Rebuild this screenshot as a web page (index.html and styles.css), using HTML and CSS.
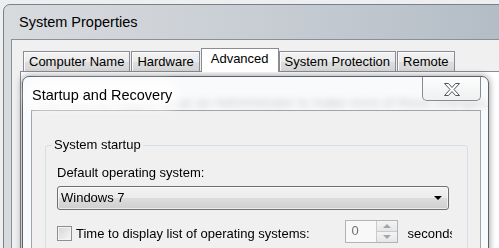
FILE: index.html
```html
<!DOCTYPE html>
<html lang="en">
<head>
  <meta charset="UTF-8">
  <title>System Properties</title>
  <link rel="stylesheet" href="styles.css">
</head>
<body>
  <!-- parent window -->
  <div class="window">
    <div class="titlebar">System Properties</div>
    <div class="client">
      <div class="tabs">
        <div class="tab">Computer Name</div>
        <div class="tab">Hardware</div>
        <div class="tab active">Advanced</div>
        <div class="tab">System Protection</div>
        <div class="tab">Remote</div>
      </div>
      <div class="tab-pane">
        <p class="admin-note">You must be logged on as an Administrator to make most of these changes.</p>
      </div>
    </div>
  </div>

  <!-- modal dialog on top -->
  <div class="dialog">
    <div class="dialog-title">
      <span class="caption">Startup and Recovery</span>
      <div class="close-btn">
        <svg width="18" height="15" viewBox="0 0 18 15">
          <path d="M1.5 1.5h4l3.5 4 3.5-4h4l-5.5 6 5.5 6h-4l-3.5-4-3.5 4h-4l5.5-6z" fill="#fff" stroke="#50545a" stroke-width="1" stroke-linejoin="round"/>
        </svg>
      </div>
    </div>
    <div class="dialog-client">
      <fieldset class="group">
        <legend>System startup</legend>
        <div class="group-body">
          <div class="field-label">Default operating system:</div>
          <div class="combo">
            <span>Windows 7</span>
            <span class="combo-arrow"></span>
          </div>
          <div class="row">
            <span class="checkbox"></span>
            <span class="check-label">Time to display list of operating systems:</span>
            <div class="spin">
              <span class="spin-value">0</span>
              <div class="spin-btns">
                <span class="spin-up"></span>
                <span class="spin-down"></span>
              </div>
            </div>
            <span class="unit">seconds</span>
          </div>
        </div>
      </fieldset>
    </div>
  </div>
</body>
</html>
```

FILE: styles.css
```css
body {
  margin: 0;
  width: 499px;
  height: 248px;
  overflow: hidden;
  position: relative;
  background: #eceef0;
  font-family: "Liberation Sans", Arial, sans-serif;
  font-size: 13px;
  color: #000;
}

/* ---- parent window ---- */
.window {
  margin: 4px 0 0 3px;
  width: 540px;
  height: 300px;
  padding-left: 7px;
  border: 1px solid #7b8188;
  border-radius: 7px 7px 0 0;
  background: linear-gradient(to right, #d8dbde 0%, #c9ced4 45%, #afb9c3 100%);
}
.titlebar {
  height: 33px;
  padding: 1px 0 0 8px;
  line-height: 33px;
  font-size: 14.5px;
  color: #000;
}
.client {
  height: 260px;
  padding: 8px 0 0 8px;
  border: 1px solid #8a9097;
  background: #f0f0f0;
}
.tabs {
  display: flex;
  align-items: flex-end;
  height: 23px;
  padding-left: 3px;
}
.tab {
  height: 19px;
  line-height: 19px;
  padding: 0 5px;
  margin-right: 1px;
  border: 1px solid #898c95;
  border-bottom: 0;
  white-space: nowrap;
  background: linear-gradient(#f3f3f3, #ebebeb 50%, #dedede 50%, #d6d6d6);
  box-shadow: inset 1px 1px 0 #fbfbfb;
}
.tab.active {
  position: relative;
  z-index: 1;
  height: 23px;
  line-height: 20px;
  padding: 0 9px;
  margin: 0 0 -1px 0;
  background: #fff;
  box-shadow: none;
}
.tab-pane {
  height: 200px;
  border: 1px solid #898c95;
  background: #fff;
}
.admin-note {
  margin: 23px 0 0 16px;
  line-height: 15px;
  font-size: 13.5px;
  white-space: nowrap;
  color: #444;
}

/* ---- Startup and Recovery dialog ---- */
.dialog {
  position: absolute;
  left: 22px;
  top: 76px;
  width: 450px;
  height: 190px;
  padding: 0 7px 0 8px;
  border: 1px solid #5d6168;
  border-radius: 7px 7px 0 0;
  background: rgba(247, 248, 250, 0.72);
  backdrop-filter: blur(3.5px);
  box-shadow: 0 0 7px rgba(0, 0, 0, 0.45);
}
.dialog-title {
  height: 30px;
  padding: 3px 0 0 1px;
  display: flex;
  align-items: center;
}
.caption {
  font-size: 14.5px;
  background: rgba(255, 255, 255, 0.85);
  box-shadow: 0 0 8px 6px rgba(255, 255, 255, 0.85);
  border-radius: 8px;
}
.close-btn {
  position: absolute;
  top: 0;
  right: 7px;
  width: 57px;
  height: 23px;
  border: 1px solid #878b92;
  border-top: 0;
  border-radius: 0 0 5px 5px;
  background: linear-gradient(#fdfdfd, #eff0f2);
  display: flex;
  align-items: center;
  justify-content: center;
}
.close-btn svg { display: block; margin-top: 1px; }

.dialog-client {
  height: 150px;
  padding: 26px 12px 0 13px;
  border: 1px solid #a0a5ab;
  background: #f0f0f0;
}
.group {
  margin: 0;
  padding: 0 10px 12px 6px;
  border: 1px solid #d5dfe5;
  border-radius: 3px;
}
.group legend {
  padding: 0 2px;
  line-height: 16px;
}
.group-body { padding: 12px 0 0 5px; }
.field-label { line-height: 16px; }

.combo {
  width: 387px;
  height: 22px;
  margin-top: 5px;
  padding-left: 3px;
  border: 1px solid #707070;
  border-radius: 3px;
  background: linear-gradient(#f2f2f2, #ebebeb 50%, #dddddd 50%, #cfcfcf);
  box-shadow: inset 0 0 0 1px rgba(255, 255, 255, 0.6);
  display: flex;
  align-items: center;
  justify-content: space-between;
  line-height: 22px;
}
.combo-arrow {
  width: 0;
  height: 0;
  margin-right: 6px;
  border-left: 4px solid transparent;
  border-right: 4px solid transparent;
  border-top: 4px solid #000;
}

.row {
  display: flex;
  align-items: center;
  height: 23px;
  margin-top: 10px;
}
.checkbox {
  width: 13px;
  height: 13px;
  margin-top: 3px;
  border: 1px solid #8e8f8f;
  background: linear-gradient(135deg, #d6d6d6, #f6f6f6);
  box-shadow: inset 0 0 0 1px #f4f4f4;
}
.check-label {
  margin: 3px 0 0 4px;
  white-space: nowrap;
}
.spin {
  width: 51px;
  height: 21px;
  margin-left: 35px;
  border: 1px solid #afb4ba;
  background: #f8f8f8;
  display: flex;
  justify-content: space-between;
}
.spin-value {
  padding-left: 6px;
  line-height: 19px;
  color: #6f6f78;
}
.spin-btns {
  width: 20px;
  display: flex;
  flex-direction: column;
  border-left: 1px solid #c8cacd;
}
.spin-up, .spin-down {
  flex: 1;
  display: flex;
  align-items: center;
  justify-content: center;
  background: linear-gradient(#f4f4f4, #e6e6e6);
}
.spin-up { border-bottom: 1px solid #c8cacd; }
.spin-up::after, .spin-down::after {
  content: "";
  border-left: 4px solid transparent;
  border-right: 4px solid transparent;
}
.spin-up::after { border-bottom: 4px solid #a3a6aa; }
.spin-down::after { border-top: 4px solid #a3a6aa; }
.unit {
  width: 44px;
  margin: 3px 0 0 10px;
  overflow: hidden;
  white-space: nowrap;
}
```
